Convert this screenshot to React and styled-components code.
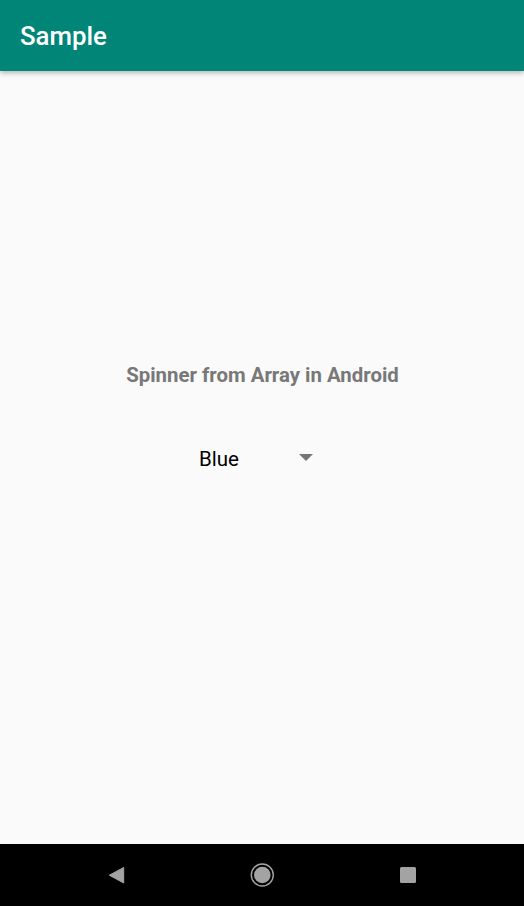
import React from "react";
import styled, { createGlobalStyle } from "styled-components";

const Global = createGlobalStyle`
  html, body { margin: 0; padding: 0; height: 100%; background: #fafafa; }
  #root { height: 100%; }
`;

const Screen = styled.div`
  width: 524px;
  height: 906px;
  display: flex;
  flex-direction: column;
  overflow: hidden;
  background: #fafafa;
  font-family: Roboto, "Liberation Sans", sans-serif;
`;

const AppBar = styled.header`
  position: relative;
  z-index: 1;
  flex: 0 0 71px;
  display: flex;
  align-items: center;
  padding-left: 20px;
  background: #008577;
  box-shadow: 0 2px 5px rgba(0, 0, 0, 0.28);
`;

const Title = styled.h1`
  margin: 1px 0 0;
  color: #fff;
  font-size: 25.8px;
  font-weight: 500;
  line-height: 30px;
`;

const Content = styled.main`
  flex: 1;
  display: flex;
  flex-direction: column;
  align-items: center;
  padding-top: 290px;
`;

const Heading = styled.h2`
  margin: 0 0 0 1px;
  color: #787878;
  font-size: 20.4px;
  font-weight: 700;
  line-height: 28px;
`;

const Spinner = styled.div`
  margin-top: 58px;
  margin-right: 12px;
  width: 114px;
  display: flex;
  align-items: center;
  justify-content: space-between;
`;

const Value = styled.span`
  color: #000;
  font-size: 20.5px;
  line-height: 24px;
`;

const Arrow = styled.svg`
  display: block;
  width: 14px;
  height: 7px;
  margin-top: -3px;
`;

const NavBar = styled.nav`
  flex: 0 0 62px;
  display: flex;
  align-items: center;
  justify-content: center;
  gap: 91px;
  background: #000;
`;

const NavIcon = styled.svg`
  display: block;
  width: 54px;
  height: 30px;
`;

export default function App() {
  return (
    <>
      <Global />
      <Screen>
        <AppBar>
          <Title>Sample</Title>
        </AppBar>
        <Content>
          <Heading>Spinner from Array in Android</Heading>
          <Spinner>
            <Value>Blue</Value>
            <Arrow viewBox="0 0 14 7">
              <path d="M0 0H14L7 7Z" fill="#757575" />
            </Arrow>
          </Spinner>
        </Content>
        <NavBar>
          <NavIcon viewBox="0 0 54 30">
            <path d="M33.7 7.5V23L19.3 15.2Z" fill="#a3a3a3" stroke="#a3a3a3" strokeWidth="1" strokeLinejoin="round" />
          </NavIcon>
          <NavIcon viewBox="0 0 54 30">
            <circle cx="27.3" cy="15" r="11" fill="none" stroke="#a3a3a3" strokeWidth="1.4" />
            <circle cx="27.3" cy="15" r="8.3" fill="#a3a3a3" />
          </NavIcon>
          <NavIcon viewBox="0 0 54 30">
            <rect x="20" y="7" width="16" height="16" rx="1.5" fill="#a3a3a3" />
          </NavIcon>
        </NavBar>
      </Screen>
    </>
  );
}
